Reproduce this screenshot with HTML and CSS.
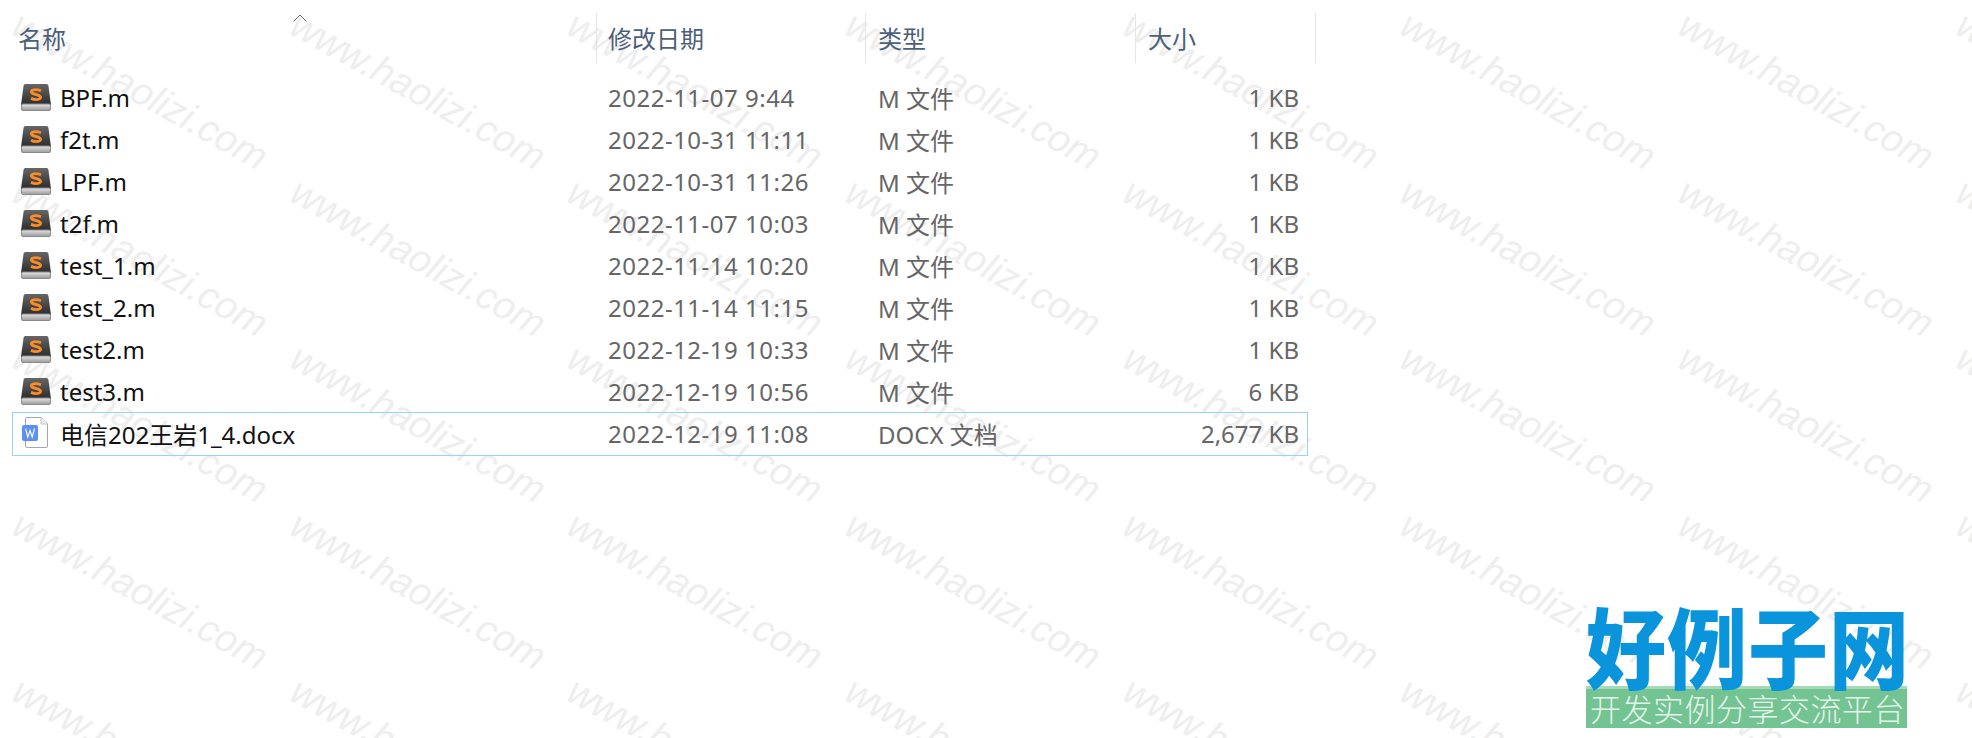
FILE: index.html
```html
<!DOCTYPE html>
<html lang="zh-CN">
<head>
    <meta charset="UTF-8">
    <title>文件列表</title>
    <link rel="stylesheet" href="styles.css">
</head>
<body>
    <svg class="defs" width="0" height="0">
        <defs>
            <linearGradient id="slab" x1="0" y1="0" x2="0" y2="1">
                <stop offset="0" stop-color="#666"/>
                <stop offset="1" stop-color="#2b2b2b"/>
            </linearGradient>
            <linearGradient id="base" x1="0" y1="0" x2="0" y2="1">
                <stop offset="0" stop-color="#e4e4e4"/>
                <stop offset="1" stop-color="#9a9a9a"/>
            </linearGradient>
            <symbol id="icon-sublime" viewBox="0 0 30 27">
                <path d="M0 21 L2.6 1.5 Q2.8 0 4.4 0 H25.6 Q27.2 0 27.4 1.5 L30 21 Z" fill="url(#slab)"/>
                <rect x="0.5" y="20" width="29" height="6.5" rx="1.5" fill="url(#base)" stroke="#8a8a8a"/>
                <path d="M20 6.8 Q15 4.8 11.5 6.2 Q9 7.6 11.6 9.4 L18.2 11.6 Q21 13.4 18.4 15 Q14.6 16.4 10 14.4" fill="none" stroke="#f98c26" stroke-width="2.8"/>
            </symbol>
            <symbol id="icon-docx" viewBox="0 0 30 32">
                <path d="M4.5 2 Q4.5 0.5 6 0.5 H20 L26.5 7 V29 Q26.5 30.5 25 30.5 H6 Q4.5 30.5 4.5 29 Z" fill="#fff" stroke="#a6a6a6"/>
                <path d="M20 0.5 V7 H26.5" fill="#efefef" stroke="#c4c4c4"/>
                <rect x="1" y="8" width="16" height="16" rx="2" fill="#5b90f2"/>
                <path d="M4.5 11.5 L6.8 20 L9 13.5 L11.2 20 L13.5 11.5" fill="none" stroke="#fff" stroke-width="1.1"/>
            </symbol>
        </defs>
    </svg>

    <div class="watermarks">
        <span>www.haolizi.com</span><span>www.haolizi.com</span><span>www.haolizi.com</span><span>www.haolizi.com</span><span>www.haolizi.com</span><span>www.haolizi.com</span><span>www.haolizi.com</span><span>www.haolizi.com</span>
        <span>www.haolizi.com</span><span>www.haolizi.com</span><span>www.haolizi.com</span><span>www.haolizi.com</span><span>www.haolizi.com</span><span>www.haolizi.com</span><span>www.haolizi.com</span><span>www.haolizi.com</span>
        <span>www.haolizi.com</span><span>www.haolizi.com</span><span>www.haolizi.com</span><span>www.haolizi.com</span><span>www.haolizi.com</span><span>www.haolizi.com</span><span>www.haolizi.com</span><span>www.haolizi.com</span>
        <span>www.haolizi.com</span><span>www.haolizi.com</span><span>www.haolizi.com</span><span>www.haolizi.com</span><span>www.haolizi.com</span><span>www.haolizi.com</span><span>www.haolizi.com</span><span>www.haolizi.com</span>
        <span>www.haolizi.com</span><span>www.haolizi.com</span><span>www.haolizi.com</span><span>www.haolizi.com</span><span>www.haolizi.com</span><span>www.haolizi.com</span><span>www.haolizi.com</span><span>www.haolizi.com</span>
    </div>

    <div class="explorer">
        <div class="header">
            <div class="head-cell name-head">名称
                <svg class="sort-arrow" width="14" height="8" viewBox="0 0 14 8"><path d="M0.5 7.5 L7 1 L13.5 7.5" fill="none" stroke="#6b6b6b"/></svg>
            </div>
            <div class="head-cell date">修改日期</div>
            <div class="head-cell">类型</div>
            <div class="head-cell">大小</div>
        </div>

        <div class="rows">
            <div class="row">
                <div class="name"><svg class="icon"><use href="#icon-sublime"/></svg>BPF.m</div>
                <div class="cell date">2022-11-07 9:44</div><div class="cell">M 文件</div><div class="cell size">1 KB</div>
            </div>
            <div class="row">
                <div class="name"><svg class="icon"><use href="#icon-sublime"/></svg>f2t.m</div>
                <div class="cell date">2022-10-31 11:11</div><div class="cell">M 文件</div><div class="cell size">1 KB</div>
            </div>
            <div class="row">
                <div class="name"><svg class="icon"><use href="#icon-sublime"/></svg>LPF.m</div>
                <div class="cell date">2022-10-31 11:26</div><div class="cell">M 文件</div><div class="cell size">1 KB</div>
            </div>
            <div class="row">
                <div class="name"><svg class="icon"><use href="#icon-sublime"/></svg>t2f.m</div>
                <div class="cell date">2022-11-07 10:03</div><div class="cell">M 文件</div><div class="cell size">1 KB</div>
            </div>
            <div class="row">
                <div class="name"><svg class="icon"><use href="#icon-sublime"/></svg>test_1.m</div>
                <div class="cell date">2022-11-14 10:20</div><div class="cell">M 文件</div><div class="cell size">1 KB</div>
            </div>
            <div class="row">
                <div class="name"><svg class="icon"><use href="#icon-sublime"/></svg>test_2.m</div>
                <div class="cell date">2022-11-14 11:15</div><div class="cell">M 文件</div><div class="cell size">1 KB</div>
            </div>
            <div class="row">
                <div class="name"><svg class="icon"><use href="#icon-sublime"/></svg>test2.m</div>
                <div class="cell date">2022-12-19 10:33</div><div class="cell">M 文件</div><div class="cell size">1 KB</div>
            </div>
            <div class="row">
                <div class="name"><svg class="icon"><use href="#icon-sublime"/></svg>test3.m</div>
                <div class="cell date">2022-12-19 10:56</div><div class="cell">M 文件</div><div class="cell size">6 KB</div>
            </div>
            <div class="row selected">
                <div class="name"><svg class="icon doc"><use href="#icon-docx"/></svg>电信202王岩1_4.docx</div>
                <div class="cell date">2022-12-19 11:08</div><div class="cell">DOCX 文档</div><div class="cell size">2,677 KB</div>
            </div>
        </div>
    </div>

    <div class="logo">
        <div class="logo-title">好例子网</div>
        <div class="logo-sub">开发实例分享交流平台</div>
    </div>
</body>
</html>
```

FILE: styles.css
```css
* {
    margin: 0;
    padding: 0;
    box-sizing: border-box;
}

html, body {
    height: 100%;
    overflow: hidden;
}

body {
    position: relative;
    background: #fff;
    font-family: 'Noto Sans', 'Noto Sans CJK SC', sans-serif;
    font-size: 24px;
}

.defs {
    position: absolute;
}

/* watermark tiles behind the list */
.watermarks {
    position: absolute;
    inset: 0;
    overflow: hidden;
    display: grid;
    grid-template-columns: repeat(8, 277.7px);
    grid-auto-rows: 166.5px;
    padding: 5px 0 0 25px;
    font-family: 'Liberation Sans', sans-serif;
    font-style: italic;
    font-size: 38.5px;
    line-height: 38px;
    color: #eeeeee;
}

.watermarks span {
    white-space: nowrap;
    transform: rotate(29deg);
    transform-origin: left top;
}

.explorer {
    position: relative;
    padding: 13px 0 0 13px;
}

.header {
    display: grid;
    grid-template-columns: 584px 269px 270px 180px;
    height: 50px;
}

.head-cell {
    position: relative;
    padding: 0 0 2px 12px;
    display: flex;
    align-items: center;
    color: #4c607a;
    border-right: 1px solid #e5e5e5;
}

.head-cell.date {
    padding-left: 11px;
}

.name-head {
    padding-left: 5px;
}

.sort-arrow {
    position: absolute;
    left: 280px;
    top: 1px;
}

.rows {
    padding-top: 14px;
}

.row {
    display: grid;
    grid-template-columns: 584px 269px 270px 171px;
    height: 42px;
    width: 1294px;
    align-items: center;
    padding-bottom: 2px;
}

.row.selected {
    outline: 1px solid #99d1ff;
}

.name {
    display: flex;
    align-items: center;
    gap: 9px;
    padding-left: 8px;
    color: #111;
}

.icon {
    width: 30px;
    height: 27px;
    flex: none;
}

.icon.doc {
    height: 32px;
}

.cell {
    padding-left: 12px;
    color: #666;
}

.cell.date {
    padding-left: 11px;
    letter-spacing: 0.5px;
}

.cell.size {
    text-align: right;
    padding-right: 8px;
}

/* site badge, bottom right */
.logo {
    position: absolute;
    left: 1586px;
    top: 600px;
    width: 321px;
}

.logo-title {
    font-family: 'Noto Sans CJK SC', sans-serif;
    font-weight: 900;
    font-size: 80px;
    line-height: 86px;
    letter-spacing: 1px;
    color: #0a94dc;
    white-space: nowrap;
    transform: scaleY(1.1);
}

.logo-sub {
    height: 42px;
    background: #74c493;
    border-top: 3px solid #a5d9b8;
    font-family: 'Noto Sans CJK SC', sans-serif;
    font-weight: 300;
    font-size: 31px;
    line-height: 37px;
    letter-spacing: 0.5px;
    padding-left: 4px;
    color: #e4f4ea;
    white-space: nowrap;
    overflow: hidden;
}
```
